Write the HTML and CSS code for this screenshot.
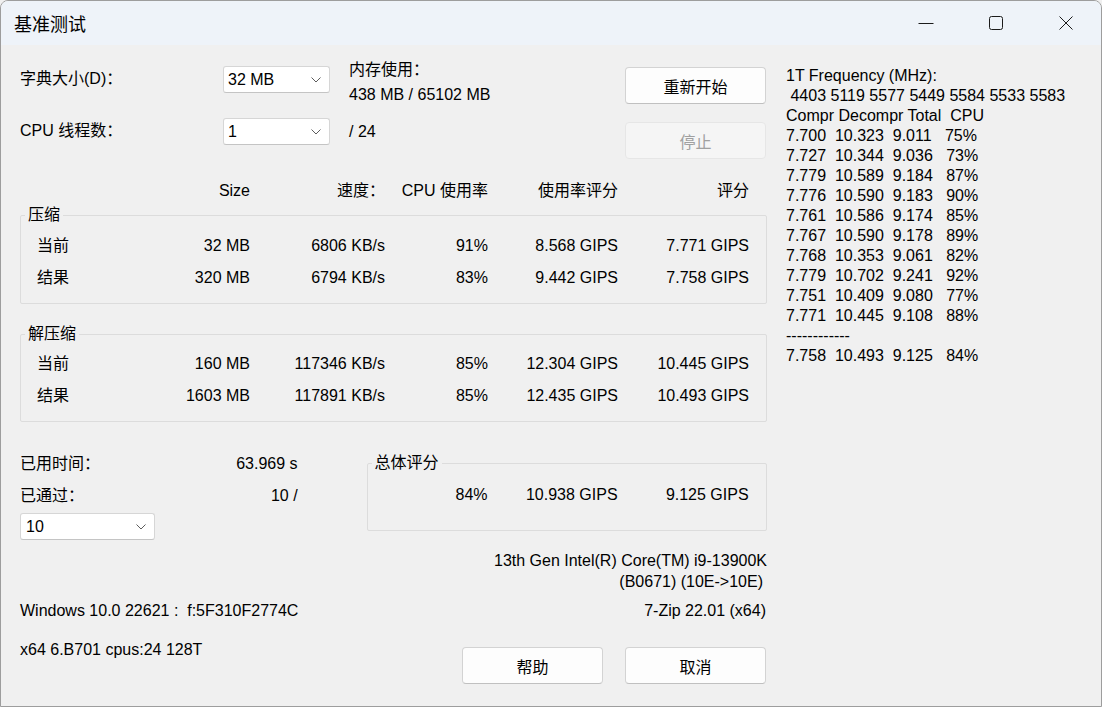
FILE: index.html
```html
<!DOCTYPE html>
<html lang="zh-CN">
<head>
<meta charset="utf-8">
<title>基准测试</title>
<link rel="stylesheet" href="styles.css">
</head>
<body>
<div class="window">
  <div class="titlebar">
    <div class="title">基准测试</div>
    <div class="controls">
      <div class="ctl"><svg width="16" height="16" viewBox="0 0 16 16"><path d="M0.5 8.5H15.5"/></svg></div>
      <div class="ctl"><svg width="16" height="16" viewBox="0 0 16 16"><rect x="1.5" y="1.5" width="13" height="13" rx="2"/></svg></div>
      <div class="ctl"><svg width="16" height="16" viewBox="0 0 16 16"><path d="M1.5 1.5L14.5 14.5M14.5 1.5L1.5 14.5"/></svg></div>
    </div>
  </div>
  <div class="main">
    <div class="left">
      <div class="top">
        <div class="lbl lbl1">字典大小(D)：</div>
        <div class="combo combo1"><span>32 MB</span><svg width="10" height="6" viewBox="0 0 10 6"><path d="M0.5 0.5L5 5L9.5 0.5"/></svg></div>
        <div class="mem">内存使用：<br>438 MB / 65102 MB</div>
        <button class="btn btn1">重新开始</button>
        <div class="lbl lbl2">CPU 线程数：</div>
        <div class="combo"><span>1</span><svg width="10" height="6" viewBox="0 0 10 6"><path d="M0.5 0.5L5 5L9.5 0.5"/></svg></div>
        <div class="threads">/ 24</div>
        <button class="btn btn2" disabled>停止</button>
      </div>

      <div class="cols head">
        <span></span><span>Size</span><span>速度：</span><span>CPU 使用率</span><span>使用率评分</span><span>评分</span>
      </div>

      <fieldset class="group g1">
        <legend>压缩</legend>
        <div class="cols row"><span class="name">当前</span><span>32 MB</span><span>6806 KB/s</span><span>91%</span><span>8.568 GIPS</span><span>7.771 GIPS</span></div>
        <div class="cols row"><span class="name">结果</span><span>320 MB</span><span>6794 KB/s</span><span>83%</span><span>9.442 GIPS</span><span>7.758 GIPS</span></div>
      </fieldset>

      <fieldset class="group g2">
        <legend>解压缩</legend>
        <div class="cols row"><span class="name">当前</span><span>160 MB</span><span>117346 KB/s</span><span>85%</span><span>12.304 GIPS</span><span>10.445 GIPS</span></div>
        <div class="cols row"><span class="name">结果</span><span>1603 MB</span><span>117891 KB/s</span><span>85%</span><span>12.435 GIPS</span><span>10.493 GIPS</span></div>
      </fieldset>

      <div class="bottom">
        <div class="stats">
          <div class="stat"><span>已用时间：</span><span>63.969 s</span></div>
          <div class="stat"><span>已通过：</span><span>10 /</span></div>
          <div class="combo combo3"><span>10</span><svg width="10" height="6" viewBox="0 0 10 6"><path d="M0.5 0.5L5 5L9.5 0.5"/></svg></div>
        </div>
        <fieldset class="group g3">
          <legend>总体评分</legend>
          <div class="tot row"><span>84%</span><span>10.938 GIPS</span><span>9.125 GIPS</span></div>
        </fieldset>
      </div>

      <div class="cpu">
        <div>13th Gen Intel(R) Core(TM) i9-13900K</div>
        <div class="cpu2">(B0671) (10E-&gt;10E)</div>
      </div>

      <div class="info">
        <span class="pre">Windows 10.0 22621 :  f:5F310F2774C</span>
        <span>7-Zip 22.01 (x64)</span>
      </div>

      <div class="foot">
        <span class="arch">x64 6.B701 cpus:24 128T</span>
        <div class="btns">
          <button class="btn">帮助</button>
          <button class="btn">取消</button>
        </div>
      </div>
    </div>

    <pre class="log">1T Frequency (MHz):
 4403 5119 5577 5449 5584 5533 5583
Compr Decompr Total  CPU
7.700  10.323  9.011   75%
7.727  10.344  9.036   73%
7.779  10.589  9.184   87%
7.776  10.590  9.183   90%
7.761  10.586  9.174   85%
7.767  10.590  9.178   89%
7.768  10.353  9.061   82%
7.779  10.702  9.241   92%
7.751  10.409  9.080   77%
7.771  10.445  9.108   88%
------------
7.758  10.493  9.125   84%</pre>
  </div>
</div>
</body>
</html>
```

FILE: styles.css
```css
* { box-sizing: border-box; }

html, body {
  margin: 0;
  padding: 0;
  background: #f0f0f0;
}

body {
  font-family: "Liberation Sans", "Noto Sans CJK SC", sans-serif;
  font-size: 16px;
  color: #000;
}

.window {
  width: 1102px;
  height: 707px;
  border: 1px solid #9d9d9d;
  border-radius: 8px 8px 0 0;
  background: #f0f0f0;
  overflow: hidden;
}

.titlebar {
  height: 44px;
  background: #eef3f9;
  display: flex;
  align-items: center;
  justify-content: space-between;
}

.title {
  padding-left: 13px;
  font-size: 18px;
  font-family: "Noto Sans CJK SC", sans-serif;
  line-height: 44px;
}

.controls {
  display: flex;
  height: 44px;
}

.ctl {
  width: 70px;
  height: 44px;
  display: flex;
  align-items: center;
  justify-content: center;
}

.ctl svg {
  fill: none;
  stroke: #1b1b1b;
  stroke-width: 1;
}

.main {
  display: flex;
  gap: 19px;
  padding-left: 19px;
}

.left {
  width: 747px;
  display: flex;
  flex-direction: column;
}

/* top controls */
.top {
  margin-top: 12px;
  display: grid;
  grid-template-columns: 203px 107px 295px 141px;
  grid-template-rows: 61px 41px;
  align-items: start;
}

.lbl {
  line-height: 27px;
  white-space: nowrap;
}
.lbl1 { margin-top: 8px; }
.lbl2 { line-height: 25px; }

.combo {
  height: 27px;
  background: #fff;
  border: 1px solid #d6d6d6;
  border-bottom-color: #c4c4c4;
  border-radius: 3px;
  display: flex;
  align-items: center;
  justify-content: space-between;
  padding: 0 8px 0 4px;
}
.combo1 { margin-top: 9px; }
.combo svg {
  fill: none;
  stroke: #5c5c5c;
  stroke-width: 1;
}

.mem {
  padding-left: 19px;
  line-height: 25px;
  white-space: nowrap;
}

.threads {
  padding-left: 19px;
  line-height: 27px;
}

.btn {
  width: 141px;
  height: 37px;
  background: #fdfdfd;
  border: 1px solid #d3d3d3;
  border-bottom-color: #c0c0c0;
  border-radius: 4px;
  font: inherit;
  color: #000;
  padding: 0;
}
.btn1 { margin-top: 10px; }
.btn2 {
  margin-top: 4px;
  background: #f5f5f5;
  border-color: #e6e6e6;
  color: #a0a0a0;
}

/* tables */
.cols {
  display: grid;
  grid-template-columns: 130px 100px 135px 103px 130px 131px;
  text-align: right;
  white-space: nowrap;
}

.head {
  margin-top: 20px;
  line-height: 24px;
}

.group {
  margin: 0;
  padding: 5px 0 9px 0;
  border: 1px solid #dcdcdc;
  border-radius: 2px;
  min-width: 0;
}

.group legend {
  margin-left: 4px;
  padding: 0 3px;
  line-height: 20px;
}

.g1 { margin-top: 2px; }
.g2 { margin-top: 20px; padding-top: 4px; }

.group .cols {
  grid-template-columns: 129px 100px 135px 103px 130px 131px;
}

.row {
  line-height: 32px;
}

.name {
  text-align: left;
  padding-left: 16px;
}

/* bottom */
.bottom {
  margin-top: 26px;
  display: flex;
  align-items: flex-start;
  gap: 69px;
}

.stats {
  width: 278px;
  display: flex;
  flex-direction: column;
}

.stat {
  display: flex;
  justify-content: space-between;
  line-height: 32px;
}

.combo3 {
  width: 135px;
  margin-top: 1px;
  padding: 0 8px 0 5px;
}

.g3 {
  width: 401px;
  margin-top: 5px;
  padding: 6px 0 19px 0;
}

.tot {
  display: grid;
  grid-template-columns: 120px 130px 131px;
  text-align: right;
}

.cpu {
  margin-top: 10px;
  text-align: right;
  line-height: 21px;
}
.cpu2 { padding-right: 4px; }

.info {
  margin-top: 8px;
  display: flex;
  justify-content: space-between;
  line-height: 21px;
  padding-right: 1px;
}

.pre { white-space: pre; }

.foot {
  display: flex;
  justify-content: space-between;
  align-items: flex-start;
}

.arch {
  margin-top: 18px;
  line-height: 21px;
}

.btns {
  margin-top: 26px;
  display: flex;
  gap: 22px;
  padding-right: 1px;
}

.log {
  margin: 21px 0 0 0;
  font-family: "Liberation Sans", sans-serif;
  font-size: 16px;
  line-height: 20px;
  white-space: pre;
}
```
